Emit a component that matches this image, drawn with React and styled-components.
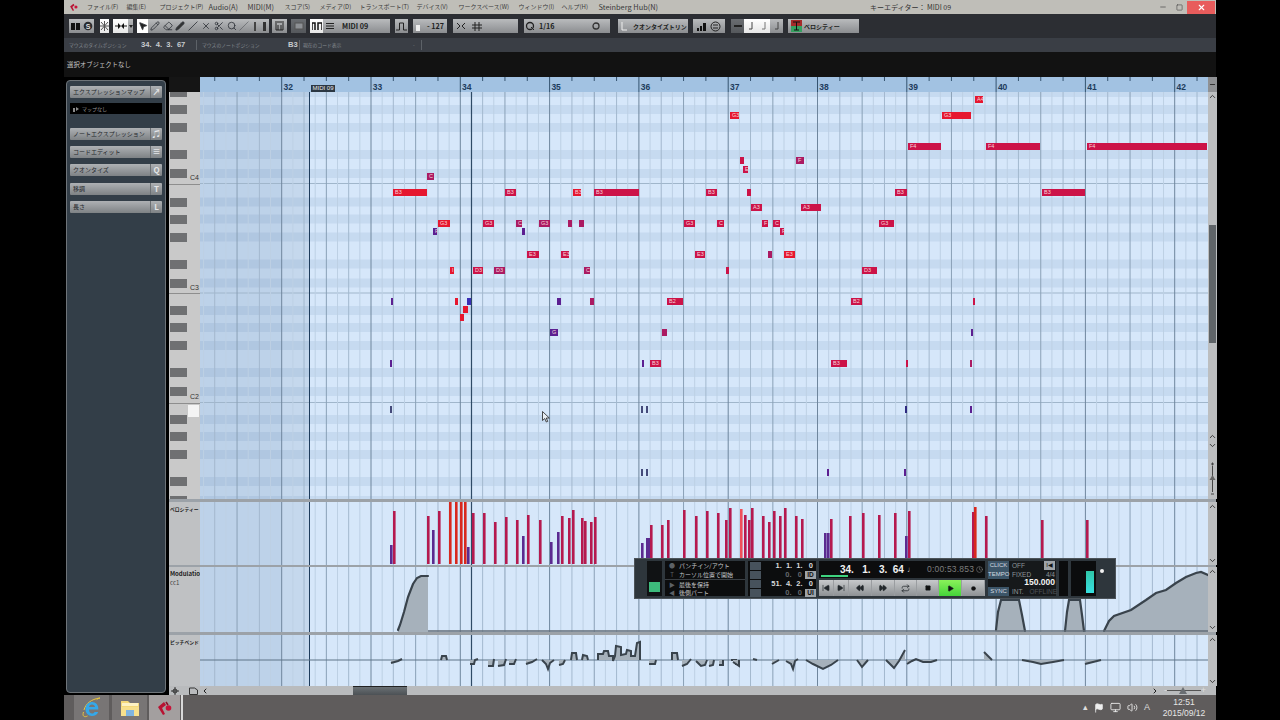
import React from 'react';
import styled, { createGlobalStyle } from 'styled-components';
import { MousePointer2, Pencil, Eraser, Slash, X, Search, Scissors, Minus, Square, Repeat, Play, Circle, SkipBack, SkipForward, Rewind, FastForward, ChevronLeft, ChevronRight, ChevronUp, ChevronDown, Volume2, Flag, Monitor, Clock as ClockIcon } from 'lucide-react';

const Global = createGlobalStyle`
  html, body { margin: 0; padding: 0; background: #000; width: 1280px; height: 720px; overflow: hidden; }
  body { font-family: "Noto Sans CJK JP", "Noto Sans", sans-serif; }
  * { box-sizing: border-box; }
`;

const Screen = styled.div`width:1280px;height:720px;background:#000;padding:0 64px;position:relative;`;
const Win = styled.div`width:1152px;height:720px;display:flex;flex-direction:column;position:relative;`;

const TitleBar = styled.div`height:14px;background:#bfbeb8;display:flex;align-items:center;padding-left:5px;position:relative;`;
const AppMark = styled.svg`width:10px;height:10px;flex:none;`;
const Menu = styled.div`display:flex;margin-left:8px;flex:1;`;
const MenuItem = styled.span`width:${p => p.$w}px;flex:none;font-size:${p => p.$latin ? 7.4 : 6}px;color:#3a3a3a;white-space:nowrap;line-height:14px;`;
const WinTitle = styled.span`font-size:7px;color:#333;width:100px;white-space:nowrap;margin-right:185px;flex:none;`;
const WinBtn = styled.div`width:${p => p.$w}px;height:13px;flex:none;display:flex;align-items:center;justify-content:center;color:${p => p.$close ? '#fff' : '#444'};background:${p => p.$close ? '#e85c5c' : 'transparent'};margin-right:${p => p.$close ? 1 : 0}px;`;

const Toolbar = styled.div`height:24px;background:#2c2e33;display:flex;align-items:center;padding-left:5px;`;
const TB = styled.div`
  width:${p => p.$w}px;height:14px;flex:none;margin-left:${p => p.$ml || 0}px;
  display:flex;align-items:center;justify-content:${p => p.$left ? 'flex-start' : 'center'};gap:${p => p.$gap || 0}px;
  padding-left:${p => p.$left ? 3 : 0}px;
  background:${p => p.$on ? 'linear-gradient(#fff,#e6e6e6)' : p.$dim ? 'linear-gradient(#6a6d71,#55585c)' : 'linear-gradient(#b9bbbd,#8b8d90)'};
  color:#1d1f22;font-size:${p => p.$jp ? 6 : 7.2}px;font-weight:700;white-space:nowrap;overflow:hidden;
`;
const Tool = styled.div`width:${p => p.$w || 12}px;height:14px;display:flex;align-items:center;justify-content:center;flex:none;color:#30343a;background:${p => p.$on ? '#fff' : 'transparent'};`;
const ToolGroup = styled.div`display:flex;height:14px;margin-left:${p => p.$ml || 0}px;background:linear-gradient(#b9bbbd,#8b8d90);flex:none;`;

const InfoBar = styled.div`height:14px;background:#3a3e45;display:flex;align-items:center;white-space:nowrap;`;
const InfoCell = styled.span`width:${p => p.$w}px;flex:none;padding-left:${p => p.$pl || 0}px;color:${p => p.$bright ? '#c8cbce' : '#868b91'};font-size:${p => p.$bright ? 7.6 : 4.8}px;font-weight:${p => p.$bright ? 700 : 400};white-space:pre;line-height:14px;font-family:${p => p.$bright ? '"Liberation Sans",sans-serif' : 'inherit'};`;
const InfoDiv = styled.i`width:1px;height:10px;background:#5d6268;flex:none;`;
const StatusBar = styled.div`height:25px;background:#121212;color:#c8c8c8;font-size:6.4px;display:flex;align-items:center;padding:0 0 1px 3px;`;

const Body = styled.div`height:618px;display:flex;background:#000;`;
const Side = styled.div`width:105px;flex:none;padding:3px 3px 2px 2px;`;
const SideInner = styled.div`height:100%;background:#333e48;border:1px solid #6e7479;border-radius:4px;padding:4px 3px;display:flex;flex-direction:column;`;
const SideBtn = styled.div`height:12px;margin-top:${p => p.$mt}px;display:flex;background:linear-gradient(#aeb1b4,#7e8285);border-radius:1px;color:#26292c;font-size:6px;line-height:12px;flex:none;`;
const SideLabel = styled.span`flex:1;padding-left:3px;white-space:nowrap;overflow:hidden;`;
const SideIcon = styled.span`width:12px;border-left:1px solid #6b6f73;color:#e4e6e8;display:flex;align-items:center;justify-content:center;font-size:8px;font-weight:700;flex:none;`;
const MapBox = styled.div`height:11px;margin-top:5px;background:#000;color:#9a9a9a;font-size:5px;line-height:11px;padding-left:3px;flex:none;display:flex;align-items:center;gap:3px;`;

const Editor = styled.div`flex:1;display:flex;flex-direction:column;min-width:0;`;
const RulerRow = styled.div`height:15px;display:flex;flex:none;`;
const Corner = styled.div`width:31px;background:#151515;flex:none;`;
const Ruler = styled.div`width:1008px;background:#a2c2e2;position:relative;overflow:hidden;flex:none;`;
const BarNum = styled.span.attrs(p => ({ style: { left: p.$x } }))`position:absolute;top:5px;font:700 8.5px/10px "Liberation Sans",sans-serif;color:#1e3c5c;`;
const MidiTag = styled.span`position:absolute;left:111px;top:8px;width:24px;height:7px;background:#2b3743;color:#e8e8e8;font:6px/7px "Liberation Sans",sans-serif;text-align:center;`;
const RulerSvg = styled.svg`position:absolute;left:0;top:0;`;
const ScrollCap = styled.div`width:9px;background:#8f9194;flex:none;display:flex;flex-direction:column;align-items:center;color:#333;padding-top:4px;`;

const Lane = styled.div`height:${p => p.$h}px;display:flex;flex:none;`;
const Sep = styled.div`height:${p => p.$h}px;background:#9ca2a8;flex:none;`;
const LaneHead = styled.div`width:31px;flex:none;background:#bfc1c3;padding:2px 0 0 1px;overflow:hidden;white-space:nowrap;color:#222;font-size:${p => p.$latin ? 6 : 4.8}px;font-weight:700;line-height:9px;`;
const SubLabel = styled.div`font-weight:400;color:#444;font-size:6px;`;
const Keys = styled.div`width:31px;flex:none;background:#c9c9c9;position:relative;overflow:hidden;`;
const BlackKey = styled.i.attrs(p => ({ style: { top: p.$y } }))`position:absolute;left:1px;width:17px;height:9px;background:#6f7072;`;
const COct = styled.i.attrs(p => ({ style: { top: p.$y } }))`position:absolute;left:0;width:31px;height:1px;background:#8e8e8e;`;
const KeyName = styled.span.attrs(p => ({ style: { top: p.$y } }))`position:absolute;left:21px;font:7px/9px "Liberation Sans",sans-serif;color:#333;`;
const LitKey = styled.i`position:absolute;left:19px;top:313px;width:11px;height:12px;background:#f4f4f4;`;

const Canvas = styled.div`width:1008px;flex:none;position:relative;overflow:hidden;background:linear-gradient(90deg,#bdd2e9 0 82px,#c5d8ed 82px 109px,#d6e7fa 109px);`;
const GridSvg = styled.svg`position:absolute;left:0;top:0;`;
const NoteBar = styled.b.attrs(p => ({ style: { left: p.$x1 - 199, top: p.$y - 92 - 3.5, width: p.$x2 - p.$x1, background: p.$c } }))`
  position:absolute;height:7px;color:#f6d5da;font:400 5.5px/7px "Liberation Sans",sans-serif;padding-left:2px;overflow:hidden;white-space:nowrap;`;
const Cursor = styled.div`position:absolute;left:342px;top:319px;svg{display:block;}`;

const VScroll = styled.div`width:9px;flex:none;background:#bcbec0;display:flex;flex-direction:column;align-items:center;justify-content:space-between;color:#333;position:relative;`;
const VThumb = styled.div`position:absolute;left:1px;top:133px;width:7px;height:118px;background:#5f6468;`;
const VZoom = styled.div`width:9px;display:flex;flex-direction:column;align-items:center;color:#333;padding-bottom:3px;`;

const HScroll = styled.div`height:9px;display:flex;background:#b9bbbd;flex:none;align-items:center;`;
const HHead = styled.div`width:31px;display:flex;justify-content:space-between;padding:0 2px;color:#333;flex:none;`;
const HTrack = styled.div`width:1008px;height:9px;position:relative;flex:none;display:flex;justify-content:space-between;align-items:center;padding:0 49px 0 1px;`;
const HThumb = styled.div`position:absolute;left:153px;top:0;width:54px;height:9px;background:linear-gradient(#6a7074,#4c5155);border-top:1px solid #222;`;
const HZoom = styled.div`position:absolute;left:964px;top:1px;width:42px;height:7px;display:flex;align-items:center;color:#333;`;
const HLine = styled.i`flex:1;height:1px;background:#555;`;
const Tri = styled.i`width:0;height:0;border-left:4px solid transparent;border-right:4px solid transparent;border-bottom:7px solid #6a6e72;position:absolute;left:15px;top:0;`;

const Taskbar = styled.div`height:25px;background:#5f5c5c;display:flex;align-items:center;padding-left:10px;flex:none;`;
const TaskTile = styled.div`width:${p => p.$w}px;height:25px;background:${p => p.$on ? '#a39f9f' : '#787575'};margin-right:${p => p.$mr}px;display:flex;align-items:center;justify-content:center;flex:none;`;
const TaskEdge = styled.i`width:2px;height:25px;background:#d8d8d8;margin-left:-1px;flex:none;`;
const Tray = styled.div`margin-left:auto;display:flex;align-items:center;color:#e8e8e8;gap:6px;padding-right:4px;`;
const Glyph = styled.span`font:9px/7px "Liberation Sans",sans-serif;color:#ddd;`;
const Clock = styled.div`width:56px;text-align:center;color:#e6e6e6;font:8.5px/11px "Liberation Sans",sans-serif;`;

const Transport = styled.div`position:absolute;left:570px;top:558px;width:482px;height:41px;background:#2e363c;border:1px solid #4c5359;display:flex;align-items:stretch;padding:2px 3px;gap:3px;`;
const Grip = styled.div`width:6px;flex:none;`;
const MeterWell = styled.div`width:15px;background:#101214;display:flex;align-items:flex-end;padding:0 2px 4px;flex:none;`;
const MeterFill = styled.i`display:block;width:100%;height:10px;background:#3dbb7c;`;
const Panel = styled.div`width:${p => p.$w}px;flex:none;background:#0c0d0e;color:#c4c7ca;font-size:6px;position:relative;`;
const PunchRow = styled.div`height:9px;line-height:9px;display:flex;align-items:center;border-top:${p => p.$line ? '1px solid #3a3f44' : 'none'};white-space:nowrap;`;
const PunchIcon = styled.span`width:14px;text-align:center;color:#5c6166;flex:none;font-size:6px;`;
const LocRow = styled.div`height:9px;display:flex;align-items:center;font:700 7.5px/9px "Liberation Sans",sans-serif;color:${p => p.$dim ? '#666a6e' : '#d8dadc'};`;
const LocIcon = styled.span`width:11px;height:8px;background:#47525c;margin:0 3px 0 2px;flex:none;`;
const LocNum = styled.span`flex:1;text-align:right;padding-right:3px;white-space:pre;`;
const LocTag = styled.span`width:11px;background:${p => p.$t ? '#9ea4a8' : 'transparent'};color:#111;font-size:6.5px;text-align:center;height:8px;line-height:8px;`;
const Main = styled.div`width:166px;flex:none;display:flex;flex-direction:column;gap:2px;`;
const TimeRow = styled.div`height:17px;background:#0c0d0e;display:flex;align-items:center;position:relative;color:#f2f2f2;white-space:pre;font:700 10px/12px "Liberation Sans",sans-serif;padding-left:21px;`;
const SmallTime = styled.span`display:flex;align-items:center;gap:2px;font:400 8.5px/9px "Liberation Sans",sans-serif;color:#7d7d7d;position:absolute;left:108px;top:4px;letter-spacing:.2px;`;
const NoteGlyph = styled.span`position:absolute;left:88px;top:4px;font:8px/9px "Liberation Sans",sans-serif;color:#c8c8c8;`;
const Greenbar = styled.i`position:absolute;left:2px;bottom:1px;width:27px;height:2px;background:#3ed37f;`;
const Btns = styled.div`flex:1;display:flex;background:linear-gradient(#c7c9cb,#8e9194);`;
const TBtn = styled.div`width:${p => p.$w}px;flex:none;display:flex;align-items:center;justify-content:center;color:#23282c;border-right:1px solid #9a9da0;background:${p => p.$go ? 'linear-gradient(#8af25a,#45d43a)' : 'transparent'};`;
const Sync = styled.div`width:68px;flex:none;background:#16191b;display:flex;flex-direction:column;justify-content:space-between;color:#8f9499;font:6.5px/9px "Liberation Sans",sans-serif;`;
const SyncRow = styled.div`display:flex;align-items:flex-start;gap:3px;height:${p => p.$h || 9}px;position:relative;`;
const SyncTag = styled.span`width:21px;background:#3c5568;color:#d3dae0;text-align:center;flex:none;height:9px;line-height:9px;font-size:6px;`;
const Tempo = styled.span`position:absolute;right:1px;top:8px;color:#f4f4f4;font:700 8.5px/9px "Liberation Sans",sans-serif;`;
const Sig = styled.span`position:absolute;right:1px;top:0;`;
const SyncKey = styled.span`position:absolute;right:1px;top:0;width:11px;height:9px;background:#9ea4a8;color:#111;text-align:center;font-size:6px;`;
const Offline = styled.span`color:#4e5358;margin-left:3px;`;
const Well = styled.div`width:${p => p.$w}px;flex:none;background:#0b0c0d;position:relative;`;
const Cyan = styled.i`position:absolute;right:2px;bottom:3px;width:8px;height:22px;background:linear-gradient(#2fc6a8,#38dfe0);`;
const Fader = styled.div`width:16px;flex:none;position:relative;`;
const Dot = styled.i`position:absolute;left:1px;top:8px;width:4px;height:4px;border-radius:50%;background:#f2f2f2;`;

const R = '#e6172f', C = '#cc1348', M = '#ab1a62', P = '#5c1f91', B = '#3a2fb5';
const notes = [
  [974, 982, 99, 'A4', R], [729, 738, 115, 'G3', R], [941, 970, 115, 'G3', R],
  [907, 940, 146, 'F4', C], [985, 1039, 146, 'F4', C], [1086, 1206, 146, 'F4', C],
  [739, 743, 160, '', C], [742, 747, 169, 'E', C], [795, 803, 160, 'F', M], [426, 433, 176, 'C', M],
  [392, 426, 192, 'B3', R], [504, 515, 192, 'B3', C], [572, 580, 192, 'B3', R], [593, 638, 192, 'B3', C],
  [705, 716, 192, 'B3', C], [746, 750, 192, '', C], [894, 906, 192, 'B3', C], [1041, 1084, 192, 'B3', C],
  [750, 761, 207, 'A3', C], [800, 820, 207, 'A3', C],
  [437, 449, 223, 'G3', R], [482, 493, 223, 'G3', C], [515, 521, 223, 'C', M], [538, 549, 223, 'G3', M],
  [567, 571, 223, '', M], [578, 583, 223, '', M], [683, 694, 223, 'G3', C], [716, 723, 223, 'C', C],
  [761, 767, 223, 'F', C], [772, 779, 223, 'C', C], [878, 893, 223, 'G3', C],
  [432, 436, 231, 'F', P], [521, 524, 231, '', P], [779, 783, 231, 'F', C],
  [526, 538, 254, 'E3', C], [560, 568, 254, 'E3', C], [694, 704, 254, 'E3', C], [767, 771, 254, '', M], [783, 794, 254, 'E3', R],
  [449, 453, 270, 'I', R], [472, 482, 270, 'D3', C], [493, 504, 270, 'D3', M], [583, 589, 270, 'C', M], [725, 728, 270, '', C], [861, 876, 270, 'D3', C],
  [390, 392, 301, '', P], [454, 457, 301, '', R], [466, 470, 301, '', B], [556, 560, 301, '', P], [589, 593, 301, '', M], [666, 682, 301, 'B2', C], [850, 861, 301, 'B2', C], [972, 974, 301, '', C],
  [462, 467, 309, '', R], [459, 463, 317, '', R],
  [549, 557, 332, 'G', P], [661, 666, 332, '', M], [970, 972, 332, '', P],
  [389, 391, 363, '', P], [641, 643, 363, '', P], [649, 660, 363, 'B3', C], [830, 846, 363, 'B3', C], [905, 907, 363, '', C], [969, 971, 363, '', M],
  [389, 390, 409, '', '#444a7a'], [640, 641, 409, '', '#444a7a'], [645, 647, 409, '', '#444a7a'], [904, 906, 409, '', '#2e2a80'], [969, 971, 409, '', P],
  [640, 642, 472, '', '#444a7a'], [645, 647, 472, '', '#444a7a'], [826, 828, 472, '', P], [903, 905, 472, '', P],
];
const KC = '#b5194f', KR = '#d8281e', KP = '#5b2a90', KK = '#f0505a';
const vel = [
  [390, 545, KP], [393, 511, KC], [427, 516, KC], [432, 530, KP], [438, 511, KC], [449, 502, KR], [455, 502, KR], [460, 502, KR], [464, 502, KR], [467, 547, KP],
  [472, 513, KC], [483, 513, KC], [494, 522, KC], [505, 517, KC], [516, 520, KC], [522, 536, KP], [527, 515, KC], [539, 520, KC], [550, 542, KP], [557, 532, KP],
  [561, 516, KC], [568, 518, KC], [572, 510, KC], [581, 518, KC], [584, 521, KC], [590, 522, KC], [594, 517, KC],
  [641, 543, KP], [646, 538, KP], [648, 538, KP], [650, 525, KC], [661, 525, KC], [667, 520, KC], [683, 510, KC], [695, 516, KC], [706, 511, KC], [717, 513, KC],
  [725, 520, KC], [729, 508, KC], [740, 509, KK], [744, 515, KC], [748, 520, KC], [751, 508, KC], [762, 516, KC], [768, 522, KC], [773, 511, KC], [779, 516, KC],
  [784, 508, KC], [795, 516, KC], [801, 519, KC], [824, 533, KP], [827, 533, KP], [830, 519, KC], [849, 516, KC], [862, 513, KC], [878, 515, KC], [894, 513, KC],
  [905, 536, KP], [908, 511, KC], [972, 512, KC], [974, 507, KR], [985, 516, KC], [1041, 520, KC], [1086, 520, KC],
];
const blackYs = [];
[88.5, 198, 306.5, 415.5].forEach(o => [0, 17, 35, 62, 81].forEach(d => blackYs.push(o + d)));
const lines = [];
for (let i = -8; i < 92; i++) {
  const x = 280.7 + i * 11.1625 - 199;
  if (x < 0 || x > 1008) continue;
  const k = ((i % 8) + 8) % 8;
  const s = k === 0 ? '#6f869d' : k === 4 ? '#8aa0b6' : k % 2 === 0 ? '#a3b8ce' : '#bdd0e4';
  lines.push([x, s, k]);
}
const Grid = ({ h, bands, children }) => (
  <GridSvg width="1008" height={h} viewBox={`0 0 1008 ${h}`}>
    {bands && blackYs.map(y => <rect key={y} x="0" y={y - 92 - 0.5} width="1008" height="9" fill="#5a86b4" opacity=".13" />)}
    {bands && [183.5, 293, 402.5].map(y => <line key={y} x1="0" x2="1008" y1={y - 92} y2={y - 92} stroke="#a0b6cb" />)}
    {lines.map(([x, s]) => <line key={x} x1={x} x2={x} y1="0" y2={h} stroke={s} strokeWidth="1" />)}
    <line x1="109.5" x2="109.5" y1="0" y2={h} stroke="#1e3c5c" />
    <line x1="271.5" x2="271.5" y1="0" y2={h} stroke="#2e4a66" strokeWidth="1.2" />
    {children}
  </GridSvg>
);
const pts = a => a.map(([x, y]) => `${x - 199},${y}`).join(' ');
const mods = [
  [[397, 630], [399, 625], [403, 612], [407, 597], [412, 584], [416, 578], [420, 576], [427, 576]],
  [[995, 630], [997, 612], [1000, 600], [1018, 600], [1021, 615], [1024, 631]],
  [[1064, 631], [1066, 612], [1068, 600], [1079, 600], [1081, 615], [1083, 631]],
  [[1103, 631], [1108, 621], [1113, 616], [1130, 610], [1145, 600], [1155, 593], [1165, 590], [1175, 583], [1185, 577], [1195, 573], [1200, 572], [1207, 575]],
];
const pitch = [
  [[390, 663], [397, 661], [401, 659]], [[440, 660], [441, 656], [445, 656], [446, 660]],
  [[469, 664], [473, 664], [474, 660], [477, 659]], [[487, 666], [492, 666], [493, 659]], [[497, 666], [503, 665], [505, 659]],
  [[508, 664], [513, 664], [515, 659]], [[525, 664], [531, 662], [536, 659]], [[541, 660], [545, 664], [547, 669], [549, 663], [553, 660]],
  [[558, 665], [562, 664], [564, 660]], [[570, 660], [571, 653], [575, 653], [576, 660]], [[581, 660], [582, 655], [586, 656], [587, 660]],
  [[597, 660], [597, 654], [602, 654], [603, 651], [607, 651], [608, 656], [612, 656], [612, 661], [614, 656], [615, 646], [620, 647], [620, 655], [625, 654], [626, 650], [630, 651], [630, 656], [634, 656], [636, 643], [639, 642], [639, 660]],
  [[648, 664], [654, 664], [655, 660]], [[671, 660], [671, 653], [676, 653], [677, 660]], [[681, 666], [686, 664], [690, 659]], [[695, 661], [700, 666], [704, 665], [706, 660]],
  [[708, 666], [712, 665], [713, 660]], [[718, 665], [722, 665], [722, 660]], [[730, 660], [735, 660], [735, 665]], [[732, 662], [738, 666], [738, 660]], [[752, 659], [756, 660]],
  [[771, 664], [778, 660]], [[785, 661], [790, 664], [792, 669], [794, 661], [797, 659]], [[805, 660], [812, 664], [822, 669], [830, 665], [837, 660]],
  [[856, 660], [861, 667], [867, 660]], [[885, 660], [893, 668], [898, 661], [904, 650]], [[906, 664], [911, 661], [915, 659], [922, 662], [930, 662], [936, 660]],
  [[983, 652], [991, 660]], [[1021, 660], [1032, 662], [1040, 664], [1052, 662], [1063, 660]], [[1084, 664], [1100, 660]],
].map(s => s.map(([x, y]) => [x, y - 635]));
const IE = () => (
  <svg width="22" height="22" viewBox="0 0 22 22">
    <path d="M3 13c1.500-6 7-11 16-12-2 0-3.500 2-3.500 2" fill="none" stroke="#e9c53f" strokeWidth="1" />
    <path d="M4.500 12.500h12.800c.5-4.500-2.500-7.500-6.300-7.500-3.800 0-6.500 3-6.500 7s2.700 7 6.500 7c3 0 5.200-1.500 6.200-4h-3.600c-.7 1-1.500 1.500-2.600 1.500-1.800 0-3-1.300-3-4zM8 10c.2-1.700 1.400-2.600 3-2.600s2.800 1 3 2.600z" fill="#34a8ea" />
    <path d="M2.500 15c-1.500 4.500 1 5.500 4 4" fill="none" stroke="#e9c53f" strokeWidth="1" />
  </svg>
);
const Folder = () => (
  <svg width="22" height="20" viewBox="0 0 22 20">
    <path d="M2 3h7l2 2h9v13H2z" fill="#f4d97a" />
    <rect x="3" y="5" width="16" height="3" fill="#fdf2c4" />
    <rect x="2" y="9" width="18" height="9" fill="#f7e08c" />
    <rect x="7" y="12" width="8" height="6" fill="#7fb4e0" />
  </svg>
);
const Cubase = ({ s = 18 }) => (
  <svg width={s} height={s} viewBox="0 0 18 18">
    <path d="M2 8l6-5 2 3-4 3 3 6-2 1z" fill="#b81232" />
    <circle cx="12.500" cy="9" r="2.800" fill="#c8143a" />
    <path d="M10 3l2 3" stroke="#8a0f28" strokeWidth="1.500" />
  </svg>
);

const menus = [['ファイル(F)', 39.5], ['編集(E)', 33], ['プロジェクト(P)', 49], ['Audio(A)', 39, 1], ['MIDI(M)', 37, 1], ['スコア(S)', 35], ['メディア(D)', 40], ['トランスポート(T)', 57], ['デバイス(V)', 42], ['ワークスペース(W)', 60], ['ウィンドウ(I)', 43], ['ヘルプ(H)', 37], ['Steinberg Hub(N)', 70, 1]];
const sideBtns = [['ノートエクスプレッション', 14, '♫'], ['コードエディット', 6, '≡'], ['クオンタイズ', 6, 'Q'], ['移調', 7, 'T'], ['長さ', 6, 'L']];
const I = { size: 10, strokeWidth: 2 };
const Up = () => <ChevronUp size={9} strokeWidth={2.5} />;
const Down = () => <ChevronDown size={9} strokeWidth={2.5} />;

export default function App() {
  return (
    <Screen>
      <Global />
      <Win>
        <TitleBar>
          <AppMark viewBox="0 0 18 18"><path d="M2 8l6-5 2 3-4 3 3 6-2 1z" fill="#b81232" /><circle cx="12.500" cy="9" r="2.800" fill="#c8143a" /></AppMark>
          <Menu>{menus.map(([m, w, l]) => <MenuItem key={m} $w={w} $latin={l}>{m}</MenuItem>)}</Menu>
          <WinTitle>キーエディター： MIDI 09</WinTitle>
          <WinBtn $w={16}><Minus size={8} /></WinBtn>
          <WinBtn $w={16}><Square size={7} /></WinBtn>
          <WinBtn $w={28} $close><X size={9} strokeWidth={3} /></WinBtn>
        </TitleBar>

        <Toolbar>
          <TB $w={12}><svg width="9" height="7"><rect width="4" height="7" fill="#111" /><rect x="5" width="4" height="7" fill="#111" /></svg></TB>
          <TB $w={13}><svg width="10" height="10"><circle cx="5" cy="5" r="4.300" fill="#2a2c30" /><text x="5" y="8" textAnchor="middle" fontSize="7" fill="#ddd" fontFamily="Liberation Sans">S</text></svg></TB>
          <TB $w={9} $ml={6} $on><svg width="9" height="10" stroke="#555" strokeWidth="1"><path d="M4.500 0v10M0 5h9M1 1l7 8M8 1l-7 8" /></svg></TB>
          <TB $w={15} $ml={4} $on><svg width="12" height="8"><path d="M0 4h4M8 4h4" stroke="#111" /><path d="M3 1l3 3-3 3zM9 1L6 4l3 3z" fill="#111" /></svg></TB>
          <TB $w={5}><svg width="4" height="3"><path d="M0 0h4L2 3z" fill="#222" /></svg></TB>
          <ToolGroup $ml={4}>
            <Tool $on $w={11}><MousePointer2 {...I} fill="#222" /></Tool>
            <Tool $w={13}><Pencil {...I} /></Tool>
            <Tool $w={13}><Eraser {...I} /></Tool>
            <Tool $w={12}><Pencil {...I} fill="#333" /></Tool>
            <Tool $w={13}><Slash {...I} /></Tool>
            <Tool $w={13}><X {...I} /></Tool>
            <Tool $w={13}><Scissors {...I} /></Tool>
            <Tool $w={13}><Search {...I} /></Tool>
            <Tool $w={12}><Slash {...I} strokeWidth={1} /></Tool>
            <Tool $w={9}><svg width="2" height="9"><rect width="2" height="9" fill="#444" /></svg></Tool>
            <Tool $w={10}><svg width="3" height="9"><rect width="3" height="9" fill="#333" /></svg></Tool>
          </ToolGroup>
          <TB $w={15} $ml={3}><svg width="11" height="10"><path d="M1 1h9M2 2v7M9 2v7M2 9h7M4 4v5M7 4v5" stroke="#222" fill="none" /></svg></TB>
          <TB $w={15} $ml={4} $dim><svg width="10" height="8"><rect x="1" y="1" width="8" height="6" fill="#8d9094" stroke="#555" /></svg></TB>
          <TB $w={13} $ml={4} $on><svg width="10" height="8"><path d="M0 8V1h3v7M6 8V1h4v7" stroke="#111" strokeWidth="1.500" fill="none" /></svg></TB>
          <TB $w={67} $left $gap={8}><svg width="8" height="6"><path d="M0 .5h8M0 3h8M0 5.500h8" stroke="#222" /></svg>MIDI 09</TB>
          <TB $w={13} $ml={5}><svg width="11" height="9"><path d="M0 8h3.500V1h4v7H11" stroke="#222" fill="none" /></svg></TB>
          <TB $w={34} $ml={5} $left $gap={6}><svg width="5" height="10"><rect y="4" width="4" height="6" fill="#eee" /></svg>- 127</TB>
          <TB $w={65} $ml={6} $left $gap={6}>
            <svg width="10" height="8"><path d="M1 1l3 3-3 3M9 1L6 4l3 3" stroke="#222" fill="none" /></svg>
            <svg width="10" height="9"><path d="M3 0v9M7 0v9M0 3h10M0 6h10" stroke="#222" /></svg>
          </TB>
          <TB $w={12} $ml={6}><svg width="10" height="10"><circle cx="5" cy="5" r="3.500" fill="none" stroke="#222" strokeWidth="1.300" /><path d="M6 6l3 3" stroke="#222" /></svg></TB>
          <TB $w={74} $left>1/16<svg width="50" height="10"><circle cx="41" cy="5" r="3" fill="none" stroke="#333" strokeWidth="1.300" /></svg></TB>
          <TB $w={70} $ml={8} $left $gap={6} $jp><svg width="6" height="9"><path d="M1 0v8h5" stroke="#eee" fill="none" /></svg>クオンタイズトリン</TB>
          <TB $w={32} $ml={5} $gap={4}><svg width="9" height="9"><path d="M0 6h2v3H0zM3 4h2v5H3zM6 1h3v8H6z" fill="#111" /></svg><svg width="11" height="11"><circle cx="5.500" cy="5.500" r="4.500" fill="none" stroke="#222" /><path d="M3 4h5M3 7h5" stroke="#222" /></svg></TB>
          <TB $w={13} $ml={6} $dim><svg width="8" height="4"><path d="M0 1h8v2H0z" fill="#222" /></svg></TB>
          <TB $w={13} $on><svg width="6" height="9"><path d="M4 0v7H1" stroke="#444" fill="none" /></svg></TB>
          <TB $w={13} $on><svg width="6" height="9"><path d="M4 0v7H1" stroke="#777" fill="none" /></svg></TB>
          <TB $w={13}><svg width="6" height="9"><path d="M4 0v7H1" stroke="#444" fill="none" /></svg></TB>
          <TB $w={71} $ml={5} $left $gap={2} $jp><svg width="11" height="12"><rect width="11" height="6" fill="#a52a2a" /><rect y="6" width="11" height="6" fill="#35a060" /><path d="M2 2h7M5.500 2v8M3 10h5" stroke="#111" /></svg>ベロシティー</TB>
        </Toolbar>

        <InfoBar>
          <InfoCell $w={77} $pl={5}>マウスのタイムポジション</InfoCell>
          <InfoCell $w={55} $bright>34.  4.  3.  67</InfoCell>
          <InfoDiv />
          <InfoCell $w={91} $pl={5}>マウスのノートポジション</InfoCell>
          <InfoCell $w={11} $bright>B3</InfoCell>
          <InfoDiv />
          <InfoCell $w={113} $pl={3}>現在のコード表示</InfoCell>
          <InfoCell $w={8}>-</InfoCell>
          <InfoDiv />
        </InfoBar>
        <StatusBar>選択オブジェクトなし</StatusBar>

        <Body>
          <Side>
            <SideInner>
              <SideBtn $mt={1}><SideLabel>エクスプレッションマップ</SideLabel><SideIcon>↗</SideIcon></SideBtn>
              <MapBox><svg width="6" height="6"><path d="M0 6V2h2v4zM3 1l3 2-3 2z" fill="#8a8a8a" /></svg>マップなし</MapBox>
              {sideBtns.map(([t, mt, ic]) => <SideBtn key={t} $mt={mt}><SideLabel>{t}</SideLabel><SideIcon>{ic}</SideIcon></SideBtn>)}
            </SideInner>
          </Side>
          <Editor>
            <RulerRow>
              <Corner />
              <Ruler>
                <RulerSvg width="1008" height="15">
                  {lines.map(([x, , k]) => ((k % 2 === 0) ? <line key={x} x1={x} x2={x} y1="0" y2={k === 0 ? 15 : 4} stroke="#34536f" /> : null))}
                </RulerSvg>
                {[32, 33, 34, 35, 36, 37, 38, 39, 40, 41, 42].map((n, i) => <BarNum key={n} $x={83.5 + i * 89.3}>{n}</BarNum>)}
                <MidiTag>MIDI 09</MidiTag>
              </Ruler>
              <ScrollCap><Minus size={7} strokeWidth={4} /></ScrollCap>
            </RulerRow>

            <Lane $h={407}>
              <Keys>
                {blackYs.map(y => <BlackKey key={y} $y={y - 92 - 0.5} />)}
                {[183.5, 293, 402.5].map(y => <COct key={y} $y={y - 92} />)}
                {[['C4', 81], ['C3', 191], ['C2', 300]].map(([t, y]) => <KeyName key={t} $y={y}>{t}</KeyName>)}
                <LitKey />
              </Keys>
              <Canvas>
                <Grid h={407} bands />
                {notes.map(([a, b, y, t, c], i) => <NoteBar key={i} $x1={a} $x2={b} $y={y} $c={c}>{t}</NoteBar>)}
                <Cursor><svg width="8" height="12"><path d="M.5.5v9l2.300-2 1.500 3.500 1.400-.6L4.300 7h3z" fill="#e8eef4" stroke="#222" strokeWidth=".8" /></svg></Cursor>
              </Canvas>
              <VScroll>
                <VThumb />
                <Up />
                <VZoom>
                  <Up />
                  <Down />
                  <svg width="7" height="34" viewBox="0 0 7 34" style={{ marginTop: 12 }}>
                    <path d="M2 2h3M3.500.5v3M3.500 4v26M2 32h3" stroke="#444" />
                    <path d="M.5 18l3-5 3 5z" fill="#666" />
                  </svg>
                </VZoom>
              </VScroll>
            </Lane>
            <Sep $h={3} />
            <Lane $h={63}>
              <LaneHead>ベロシティー</LaneHead>
              <Canvas>
                <Grid h={63}>
                  {vel.map(([x, t, c]) => <rect key={x} x={x - 199 - 1} y={t - 502} width="2.600" height={564 - t} fill={c} />)}
                </Grid>
              </Canvas>
              <VScroll><Up /><Down /></VScroll>
            </Lane>
            <Sep $h={2} />
            <Lane $h={65}>
              <LaneHead $latin>Modulation<SubLabel>cc1</SubLabel></LaneHead>
              <Canvas>
                <Grid h={65}>
                  <g transform="translate(0,-567)">
                    {mods.map((m, i) => (
                      <g key={i}>
                        <polygon points={pts([...m, [m[m.length - 1][0], 632], [m[0][0], 632]])} fill="#a6b1bb" />
                        <polyline points={pts(m)} fill="none" stroke="#39434c" strokeWidth="2.200" strokeLinecap="round" />
                      </g>
                    ))}
                    <line x1="228" x2="1008" y1="631" y2="631" stroke="#626d77" strokeWidth="1.500" />
                  </g>
                </Grid>
              </Canvas>
              <VScroll><Up /><Down /></VScroll>
            </Lane>
            <Sep $h={3} />
            <Lane $h={51}>
              <LaneHead>ピッチベンド</LaneHead>
              <Canvas>
                <Grid h={51}>
                  <line x1="0" x2="1008" y1="25" y2="25" stroke="#5f7488" />
                  {pitch.map((s, i) => (
                    <g key={i}>
                      <polygon points={pts([...s, [s[s.length - 1][0], 25], [s[0][0], 25]])} fill="#a6b1bb" />
                      <polyline points={pts(s)} fill="none" stroke="#39434c" strokeWidth="2" />
                    </g>
                  ))}
                </Grid>
              </Canvas>
              <VScroll><Up /><Down /></VScroll>
            </Lane>
            <HScroll>
              <HHead><svg width="8" height="8"><path d="M4 0v8M0 4h8" stroke="#333" /><circle cx="4" cy="4" r="2" fill="none" stroke="#333" /></svg><svg width="9" height="8"><path d="M.5 1h5l3 2v4.500h-8z" fill="none" stroke="#333" /></svg></HHead>
              <HTrack>
                <ChevronLeft size={8} strokeWidth={2.5} />
                <HThumb />
                <ChevronRight size={8} strokeWidth={2.5} />
                <HZoom><Glyph>-</Glyph><HLine /><Tri /><Glyph>+</Glyph></HZoom>
              </HTrack>
            </HScroll>
          </Editor>
        </Body>

        <Taskbar>
          <TaskTile $w={35} $mr={3}><IE /></TaskTile>
          <TaskTile $w={35} $mr={2}><Folder /></TaskTile>
          <TaskTile $w={31} $mr={2} $on><Cubase /></TaskTile>
          <TaskEdge />
          <Tray>
            <Glyph>▴</Glyph>
            <Flag size={10} fill="#eee" />
            <Monitor size={11} />
            <Volume2 size={11} />
            <Glyph>A</Glyph>
            <Clock>12:51<br />2015/09/12</Clock>
          </Tray>
        </Taskbar>

        <Transport>
          <Grip />
          <MeterWell><MeterFill /></MeterWell>
          <Panel $w={80}>
            <PunchRow><PunchIcon>●</PunchIcon>パンチイン/アウト</PunchRow>
            <PunchRow><PunchIcon>T</PunchIcon>カーソル位置で開始</PunchRow>
            <PunchRow $line><PunchIcon>▶</PunchIcon>最後を保持</PunchRow>
            <PunchRow><PunchIcon>◀</PunchIcon>後側パート</PunchRow>
          </Panel>
          <Panel $w={68}>
            <LocRow><LocIcon /><LocNum>1.  1.  1.   0</LocNum></LocRow>
            <LocRow $dim><LocIcon /><LocNum>0.   0</LocNum><LocTag $t>ID</LocTag></LocRow>
            <LocRow><LocIcon /><LocNum>51.  4.  2.   0</LocNum></LocRow>
            <LocRow $dim><LocIcon /><LocNum>0.   0</LocNum><LocTag $t>UI</LocTag></LocRow>
          </Panel>
          <Main>
            <TimeRow>34.   1.   3.  64<NoteGlyph>♩</NoteGlyph><SmallTime>0:00:53.853<ClockIcon size={7} /></SmallTime><Greenbar /></TimeRow>
            <Btns>
              <TBtn $w={15}><SkipBack size={8} fill="#23282c" /></TBtn>
              <TBtn $w={15}><SkipForward size={8} fill="#23282c" /></TBtn>
              <TBtn $w={23}><Rewind size={8} fill="#23282c" /></TBtn>
              <TBtn $w={23}><FastForward size={8} fill="#23282c" /></TBtn>
              <TBtn $w={22}><Repeat size={9} /></TBtn>
              <TBtn $w={22}><Square size={6} fill="#111" /></TBtn>
              <TBtn $w={23} $go><Play size={7} fill="#111" /></TBtn>
              <TBtn $w={23}><Circle size={5} fill="#111" /></TBtn>
            </Btns>
          </Main>
          <Sync>
            <SyncRow><SyncTag>CLICK</SyncTag>OFF<SyncKey>I◀</SyncKey></SyncRow>
            <SyncRow $h={17}><SyncTag>TEMPO</SyncTag>FIXED<Sig>4/4</Sig><Tempo>150.000</Tempo></SyncRow>
            <SyncRow><SyncTag>SYNC</SyncTag>INT.<Offline>OFFLINE</Offline></SyncRow>
          </Sync>
          <Well $w={9} />
          <Well $w={25}><Cyan /></Well>
          <Fader><Dot /></Fader>
        </Transport>
      </Win>
    </Screen>
  );
}
